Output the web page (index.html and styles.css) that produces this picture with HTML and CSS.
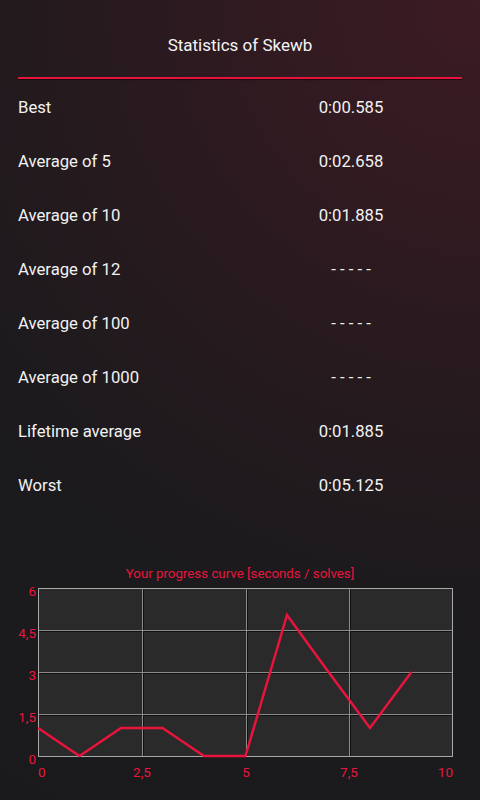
FILE: index.html
```html
<!DOCTYPE html>
<html lang="en">
<head>
  <meta charset="UTF-8">
  <title>Statistics of Skewb</title>
  <link rel="stylesheet" href="styles.css">
</head>
<body>

  <div class="screen">
    <div class="header">
      <h1 class="title">Statistics of Skewb</h1>
      <div class="rule"></div>
    </div>

    <div class="stats">
      <div class="row"><span class="label">Best</span><span class="value">0:00.585</span></div>
      <div class="row"><span class="label">Average of 5</span><span class="value">0:02.658</span></div>
      <div class="row"><span class="label">Average of 10</span><span class="value">0:01.885</span></div>
      <div class="row"><span class="label">Average of 12</span><span class="value">- - - - -</span></div>
      <div class="row"><span class="label">Average of 100</span><span class="value">- - - - -</span></div>
      <div class="row"><span class="label">Average of 1000</span><span class="value">- - - - -</span></div>
      <div class="row"><span class="label">Lifetime average</span><span class="value">0:01.885</span></div>
      <div class="row"><span class="label">Worst</span><span class="value">0:05.125</span></div>
    </div>

    <div class="chart">
      <div class="chart-title">Your progress curve [seconds / solves]</div>
      <svg class="chart-svg" width="480" height="218" viewBox="0 0 480 218">
        <rect class="plot" x="38" y="6" width="415" height="168"/>
        <!-- grid -->
        <g class="grid-shadow">
          <line x1="38" y1="49.5" x2="453" y2="49.5"/>
          <line x1="38" y1="91.5" x2="453" y2="91.5"/>
          <line x1="38" y1="133.5" x2="453" y2="133.5"/>
          <line x1="143.5" y1="6" x2="143.5" y2="174"/>
          <line x1="247.5" y1="6" x2="247.5" y2="174"/>
          <line x1="350.5" y1="6" x2="350.5" y2="174"/>
        </g>
        <g class="grid">
          <line x1="38" y1="48.5" x2="453" y2="48.5"/>
          <line x1="38" y1="90.5" x2="453" y2="90.5"/>
          <line x1="38" y1="132.5" x2="453" y2="132.5"/>
          <line x1="142.5" y1="6" x2="142.5" y2="174"/>
          <line x1="246.5" y1="6" x2="246.5" y2="174"/>
          <line x1="349.5" y1="6" x2="349.5" y2="174"/>
        </g>
        <g class="axis">
          <line x1="38" y1="6.5" x2="453" y2="6.5"/>
          <line x1="38.5" y1="6" x2="38.5" y2="174"/>
          <line x1="452.5" y1="6" x2="452.5" y2="174"/>
          <line x1="38" y1="174.5" x2="453" y2="174.5"/>
        </g>
        <polyline class="curve" points="38,146 79.5,174 121,146 162.5,146 204,174 245.5,174 287,33 328.5,90 370,146 411.5,90"/>
        <g class="y-labels">
          <text x="36" y="14">6</text>
          <text x="36" y="56">4,5</text>
          <text x="36" y="98">3</text>
          <text x="36" y="140">1,5</text>
          <text x="36" y="182">0</text>
        </g>
        <g class="x-labels">
          <text x="38" y="195" class="first">0</text>
          <text x="142" y="195">2,5</text>
          <text x="246" y="195">5</text>
          <text x="349" y="195">7,5</text>
          <text x="453" y="195" class="last">10</text>
        </g>
      </svg>
    </div>
  </div>

</body>
</html>
```

FILE: styles.css
```css
body {
  margin: 0;
  font-family: Roboto, 'Liberation Sans', sans-serif;
  color: #f2f2f2;
  background: #1a1a1c;
}
.screen {
  width: 480px;
  height: 800px;
  overflow: hidden;
  background: radial-gradient(circle at 100% 0%, #3c1b23 0%, #2a1a1f 35%, #1c1a1d 65%, #1a1a1c 100%);
}
.header {
  padding: 35px 18px 0;
}
.title {
  margin: 0;
  font-size: 17px;
  font-weight: 400;
  line-height: 20px;
  text-align: center;
  color: #f4f4f4;
}
.rule {
  margin-top: 22px;
  height: 2px;
  background: #e8133c;
  box-shadow: 0 1px 1px rgba(0, 0, 0, 0.5);
}
.stats {
  padding: 1px 18px 0;
}
.row {
  display: grid;
  grid-template-columns: 1fr 1fr;
  height: 54px;
  align-items: center;
  font-size: 16.7px;
}
.value {
  text-align: center;
}
.chart {
  margin-top: 54px;
}
.chart-title {
  font-size: 13.3px;
  line-height: 16px;
  text-align: center;
  color: #e8163e;
}
.chart-svg {
  display: block;
}
.plot {
  fill: #2a2a2a;
}
.grid line {
  stroke: #8a8a8a;
  stroke-width: 1;
}
.grid-shadow line {
  stroke: #111;
  stroke-width: 1;
}
.axis line {
  stroke: #a8a8a8;
  stroke-width: 1;
}
.curve {
  fill: none;
  stroke: #e8143c;
  stroke-width: 2.5;
  stroke-linejoin: miter;
}
.y-labels text,
.x-labels text {
  font-family: Roboto, 'Liberation Sans', sans-serif;
  font-size: 13.5px;
  fill: #e8163e;
}
.y-labels text {
  text-anchor: end;
}
.x-labels text {
  text-anchor: middle;
}
.x-labels .first {
  text-anchor: start;
}
.x-labels .last {
  text-anchor: end;
}
```
